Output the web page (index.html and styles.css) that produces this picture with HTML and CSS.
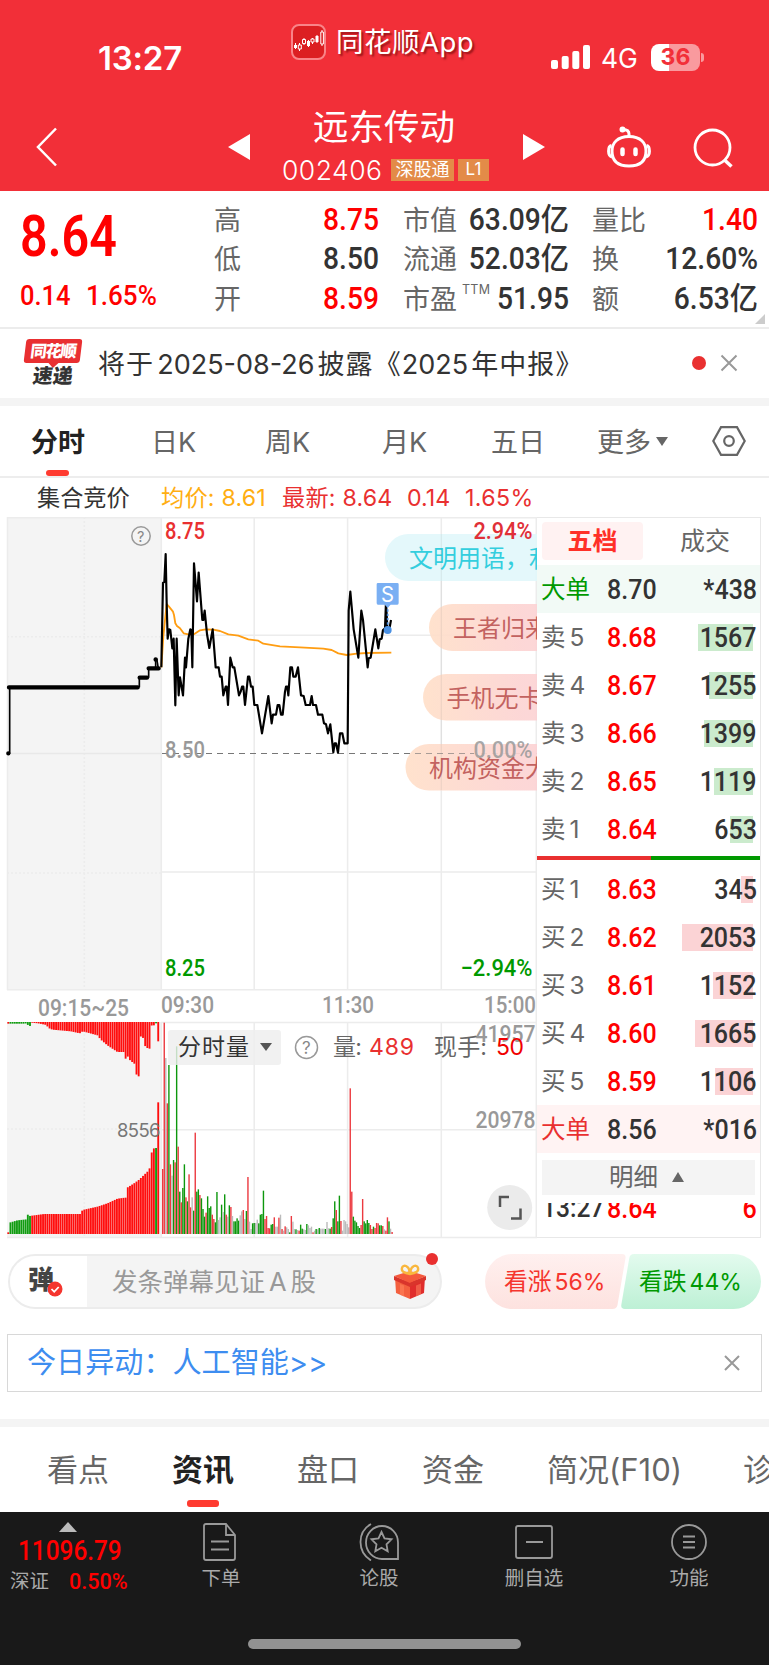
FILE: index.html
```html
<!DOCTYPE html>
<html lang="zh-CN">
<head>
    <meta charset="UTF-8">
    <meta name="viewport" content="width=device-width, initial-scale=1.0">
    <title>远东传动 002406</title>
    <link rel="stylesheet" href="styles.css">
</head>
<body>
    <header>
        <div class="status">
            <span class="clock">13:27</span>
            <div class="app">
                <svg width="36" height="36" viewBox="0 0 36 36">
                    <rect x="1" y="1" width="33" height="34" rx="7" fill="#dc1f22" stroke="#f98488" stroke-width="2"/>
                    <path d="M4.500 19v6M8.500 19v8M13 14v7M17.500 16v7M21.500 14v6M26 11v8M31 6v16" stroke="#fff" stroke-width="1"/>
                    <path d="M3 21h3v3h-3zM16 17h3v5h-3zM24.500 12h3v6h-3z" fill="#fff"/>
                    <path d="M7.300 21h3v4h-3zM11.500 15.500h3v4h-3zM20 15h3v3h-3zM29.800 8h2.600v12h-2.600z" fill="#dc1f22" stroke="#fff" stroke-width="1"/>
                </svg>
                <span>同花顺App</span>
            </div>
            <div class="signal">
                <svg width="39" height="25" viewBox="0 0 39 25" fill="#fff">
                    <rect x="0" y="15" width="7" height="9" rx="2"/>
                    <rect x="10.700" y="11" width="7" height="13" rx="2"/>
                    <rect x="21.300" y="6" width="7" height="18" rx="2"/>
                    <rect x="32" y="0" width="7" height="24" rx="2"/>
                </svg>
                <span class="net">4G</span>
                <span class="battery">36</span>
                <i class="nub"></i>
            </div>
        </div>
        <div class="nav">
            <svg class="back" width="22" height="40" viewBox="0 0 22 40"><path d="M20 1.500L2 20l18 18.500" fill="none" stroke="#fff" stroke-width="2.500"/></svg>
            <svg class="prev" width="22" height="26" viewBox="0 0 22 26"><path d="M22 0v26L0 13z" fill="#fff"/></svg>
            <div class="stock">
                <h1>远东传动</h1>
                <div class="code"><span>002406</span><b class="tag">深股通</b><b class="tag tag-l1">L1</b></div>
            </div>
            <svg class="next" width="22" height="26" viewBox="0 0 22 26"><path d="M0 0v26l22-13z" fill="#fff"/></svg>
            <svg class="robot" width="46" height="42" viewBox="0 0 46 42" fill="none" stroke="#fff" stroke-width="3">
                <path d="M23 10.500C11.500 10.500 6 17 6 25s3.500 15 17 15 17-7 17-15-5.500-14.500-17-14.500z"/>
                <path d="M5.500 19.500C1.500 20.500 1.500 30 6 31M40.500 19.500C44.500 20.500 44.500 30 40 31M23 10V8c0-3.500-2.500-4.500-6-4.500"/>
                <circle cx="16.500" cy="3.500" r="1.500" fill="#fff"/>
                <path d="M16.500 23.500v4.500M29.500 23.500v4.500" stroke-width="4.500" stroke-linecap="round"/>
            </svg>
            <svg class="search" width="42" height="42" viewBox="0 0 42 42" fill="none" stroke="#fff" stroke-width="2.800"><circle cx="19.500" cy="19.500" r="17.500"/><path d="M31.500 32l7 6.500" stroke-width="3.500"/></svg>
        </div>
    </header>

    <section class="quote">
        <div class="last">
            <span class="price num">8.64</span>
            <div class="change"><span class="num">0.14</span><span class="num">1.65%</span></div>
        </div>
        <dl class="stats s1">
            <dt>高</dt><dd class="num red">8.75</dd>
            <dt>低</dt><dd class="num">8.50</dd>
            <dt>开</dt><dd class="num red">8.59</dd>
        </dl>
        <dl class="stats s2">
            <dt>市值</dt><dd class="num">63.09亿</dd>
            <dt>流通</dt><dd class="num">52.03亿</dd>
            <dt>市盈<sup>TTM</sup></dt><dd class="num">51.95</dd>
        </dl>
        <dl class="stats s3">
            <dt>量比</dt><dd class="num red">1.40</dd>
            <dt>换</dt><dd class="num">12.60%</dd>
            <dt>额</dt><dd class="num">6.53亿</dd>
        </dl>
        <i class="corner"></i>
    </section>

    <section class="notice">
        <div class="express"><b class="bubble">同花顺</b><b class="black">速递</b></div>
        <p>将于<span>2025-08-26</span>披露《<span class="year">2025</span>年中报》</p>
        <i class="dot"></i>
        <svg class="close" width="18" height="18" viewBox="0 0 18 18"><path d="M1.500 1.500l15 15M16.500 1.500l-15 15" stroke="#999" stroke-width="2"/></svg>
    </section>

    <nav class="periods">
        <span class="active">分时</span>
        <span>日K</span>
        <span>周K</span>
        <span>月K</span>
        <span>五日</span>
        <span>更多<i class="caret"></i></span>
        <svg width="34" height="30" viewBox="0 0 34 30" fill="none" stroke="#666" stroke-width="2.200"><path d="M9 1.200h16L32.700 15 25 28.800H9L1.300 15z"/><circle cx="17" cy="15" r="4.800"/></svg>
    </nav>

    <div class="info">
        <span class="i-call">集合竞价</span>
        <span class="i-avg">均价: 8.61</span>
        <span class="i-new">最新: 8.64</span>
        <span class="i-chg">0.14</span>
        <span class="i-pct">1.65%</span>
    </div>

    <main>
        <div class="chart">
            <svg id="chart" width="537" height="723" viewBox="0 0 537 723">
                <defs>
                    <linearGradient id="warm" x1="0" x2="1"><stop offset="0" stop-color="#ffe0ca"/><stop offset="1" stop-color="#fcd3d5"/></linearGradient>
                </defs>
                <!-- 背景与网格 -->
                <rect x="7" y="0" width="154" height="473" fill="#f4f4f4"/>
                <rect x="7" y="505" width="154" height="216" fill="#f4f4f4"/>
                <g fill="none" stroke="#ececec" stroke-width="1.500">
                    <path d="M7 .700H537M7 472.800H537M161 118.300H537M161 355H537M7.500 0V473M161.300 0V473M254.200 0V473M347.600 0V473M441.300 0V473M536.300 0V721"/>
                    <path d="M161 505.500H537M161 612.700H537M7 720.500H537M161.300 505V721M254.200 505V721M347.600 505V721M441.300 505V721"/>
                    <path d="M84.300 0V473M84.300 505V721M7 119.800H161M7 356H161M7 612H161" stroke-dasharray="2 2"/>
                    <path d="M7 236.500H161" stroke="#e8e8e8"/>
                </g>
                <path d="M162 236.500H537" stroke="#777" stroke-width="1.200" stroke-dasharray="6 5"/>

                <!-- 弹幕 -->
                <g opacity=".93" font-size="24">
                    <path d="M537 17H408.500a23.500 23.500 0 0 0 0 47H537z" fill="#e2f8fb"/>
                    <text x="409" y="50" fill="#25cbdc">文明用语，利</text>
                    <path d="M537 87H452.500a23.500 23.500 0 0 0 0 47H537z" fill="url(#warm)"/>
                    <text x="453" y="120" fill="#bf5754">王者归来</text>
                    <path d="M537 157H446.300a23.250 23.250 0 0 0 0 46.500H537z" fill="url(#warm)"/>
                    <text x="446.500" y="190" fill="#bf5754">手机无卡</text>
                    <path d="M537 227H428.800a23.250 23.250 0 0 0 0 46.500H537z" fill="url(#warm)"/>
                    <text x="429" y="260" fill="#bf5754">机构资金大</text>
                </g>
                <path d="M441.300 17V273" stroke="#777" stroke-opacity=".1" stroke-width="1.200"/>
                <path d="M404 236.500H474" stroke="#777" stroke-opacity=".6" stroke-width="1.200" stroke-dasharray="6 5"/>

                <!-- 分时走势 -->
                <g transform="translate(0 -7) scale(.33333)" fill="none" stroke-linejoin="round">
                    <path stroke="#ff9d12" stroke-width="5.500" d="M484 472L490 380L500 282L507 290L519 305L522 315L526 340L531 348L540 355L551 370L565 373L583 372L600 361L617 358L640 359L660 363L685 373L715 377L745 388L775 392L790 401L840 409L900 412L970 416L995 420L1015 430L1040 435L1070 431L1100 429L1174 428"/>
                    <path stroke="#000" stroke-width="6.500" d="M484 472L489 218L493 216L497 132L500 280L503 386L507 358L511 360L517 415L521 386L526 586L530 386L536 556L540 502L549 556L555 443L558 472L565 386L571 358L574 360L577 472L582 160L591 274L596 188L607 330L610 330L614 302L621 372L628 414L638 358L647 472L656 472L660 500L665 500L670 556L677 530L680 530L684 585L691 443L698 472L703 472L717 556L722 545L726 530L730 530L735 585L744 500L748 500L753 530L758 530L763 585L772 585L786 670L805 558L815 640L819 614L828 614L833 585L838 585L843 614L848 614L855 545L858 530L862 530L865 556L871 472L876 472L880 500L887 500L894 472L903 556L911 558L917 585L930 585L935 558L939 585L948 585L954 614L967 614L972 640L978 643L984 670L991 643L1000 727L1004 700L1008 700L1014 728L1020 670L1027 670L1033 700L1043 700L1046 302L1051 245L1061 358L1075 443L1084 302L1089 330L1103 472L1106 445L1112 443L1126 358L1135 415L1139 388L1145 386L1149 360L1155 355L1158 275L1162 355L1168 358L1173 330"/>
                    <path stroke="#000" stroke-width="5" d="M22 730H29V532M418 532V503M446 503V475M467 475V446"/>
                    <path stroke="#000" stroke-width="13" stroke-linecap="round" d="M27 532H413M419 503H441M446 475H476M467 448v1M25 730v0"/>
                    <path stroke="#000" stroke-width="5" d="M470 446L475 475"/>
                    <path d="M1163 285V360" stroke="#4a8ee0" stroke-width="5" stroke-dasharray="7 6"/>
                    <circle cx="1163" cy="360" r="12" fill="#4a90e2"/>
                    <path d="M1134 219h58q4 0 4 4v56q0 5-4 5h-20l-9 9-9-9h-20q-4 0-4-5v-56q0-4 4-4z" fill="#7aaff3"/>
                </g>
                <text x="381" y="85" font-size="21" fill="#fff" textLength="13" lengthAdjust="spacingAndGlyphs">S</text>

                <!-- 成交量 -->
                <g id="volume" transform="translate(0 493) scale(.33333)" fill="none"></g>
                <rect x="168" y="513" width="113" height="35" rx="3" fill="#eeeeee" fill-opacity=".82"/>
                <path d="M260 526h12l-6 8z" fill="#555"/>

                <!-- 坐标文字 -->
                <g class="axis" font-size="23.500">
                    <text x="165" y="22" textLength="40" lengthAdjust="spacingAndGlyphs" fill="#e93030">8.75</text>
                    <text x="473.500" y="22" textLength="59" lengthAdjust="spacingAndGlyphs" fill="#e03038">2.94%</text>
                    <text x="165" y="240.500" textLength="40" lengthAdjust="spacingAndGlyphs" fill="#999">8.50</text>
                    <text x="473.500" y="240.500" textLength="59" lengthAdjust="spacingAndGlyphs" fill="#999" fill-opacity=".85">0.00%</text>
                    <text x="165" y="459" textLength="40" lengthAdjust="spacingAndGlyphs" fill="#009900">8.25</text>
                    <text x="460.500" y="459" textLength="72" lengthAdjust="spacingAndGlyphs" fill="#009900">−2.94%</text>
                </g>
                <g class="axis grey" font-size="23.500">
                    <text x="38" y="498.500" textLength="91" lengthAdjust="spacingAndGlyphs">09:15~25</text>
                    <text x="161" y="496" textLength="53" lengthAdjust="spacingAndGlyphs">09:30</text>
                    <text x="322" y="496" textLength="52" lengthAdjust="spacingAndGlyphs">11:30</text>
                    <text x="484" y="496" textLength="52" lengthAdjust="spacingAndGlyphs">15:00</text>
                    <text x="475.500" y="525" textLength="60" lengthAdjust="spacingAndGlyphs">41957</text>
                    <text x="475.500" y="611" textLength="60" lengthAdjust="spacingAndGlyphs">20978</text>
                </g>
                <text x="117" y="620" font-size="18.500" fill="#777" textLength="43.500">8556</text>
                <g font-size="23" fill="#666">
                    <text x="178" y="538" fill="#333" textLength="71">分时量</text>
                    <text x="333" y="538" textLength="29">量:</text>
                    <text x="369" y="538" fill="#e93030" textLength="45">489</text>
                    <text x="434" y="538" textLength="53">现手:</text>
                    <text x="496" y="538" fill="#f00000" textLength="28">50</text>
                </g>
                <g fill="none" stroke="#999" stroke-width="1.500"><circle cx="141" cy="19" r="9.200"/><circle cx="306.500" cy="530.500" r="11"/></g>
                <text x="137" y="24.500" font-size="14.500" fill="#888">?</text>
                <text x="302" y="537" font-size="17" fill="#888">?</text>

                <circle cx="509.700" cy="690.500" r="22.500" fill="#ebebeb"/>
                <path d="M500 690v-10h9M520.500 691.500v10h-9.500" fill="none" stroke="#555" stroke-width="2.500"/>
            </svg>
        </div>

        <aside class="book">
            <div class="book-tabs"><b>五档</b><span>成交</span></div>
            <div class="row big sell"><span>大单</span><em class="num">8.70</em><strong class="num">*438</strong></div>
            <div class="row sell"><span>卖<u>5</u></span><em class="num">8.68</em><i style="width:55px"></i><strong class="num">1567</strong></div>
            <div class="row sell"><span>卖<u>4</u></span><em class="num">8.67</em><i style="width:44px"></i><strong class="num">1255</strong></div>
            <div class="row sell"><span>卖<u>3</u></span><em class="num">8.66</em><i style="width:49px"></i><strong class="num">1399</strong></div>
            <div class="row sell"><span>卖<u>2</u></span><em class="num">8.65</em><i style="width:39px"></i><strong class="num">1119</strong></div>
            <div class="row sell"><span>卖<u>1</u></span><em class="num">8.64</em><i style="width:23px"></i><strong class="num">653</strong></div>
            <div class="ratio"></div>
            <div class="row buy"><span>买<u>1</u></span><em class="num">8.63</em><i style="width:12px"></i><strong class="num">345</strong></div>
            <div class="row buy"><span>买<u>2</u></span><em class="num">8.62</em><i style="width:71px"></i><strong class="num">2053</strong></div>
            <div class="row buy"><span>买<u>3</u></span><em class="num">8.61</em><i style="width:40px"></i><strong class="num">1152</strong></div>
            <div class="row buy"><span>买<u>4</u></span><em class="num">8.60</em><i style="width:58px"></i><strong class="num">1665</strong></div>
            <div class="row buy"><span>买<u>5</u></span><em class="num">8.59</em><i style="width:38px"></i><strong class="num">1106</strong></div>
            <div class="row big buy"><span>大单</span><em class="num">8.56</em><strong class="num">*016</strong></div>
            <div class="detail">明细<i></i></div>
            <div class="ticks">
                <div class="tick"><span class="num">13:27</span><em class="num">8.64</em><strong class="num">6</strong></div>
                <div class="tick"><span class="num"></span><em class="num">8.64</em><strong class="num">50</strong></div>
            </div>
        </aside>
    </main>

    <section class="danmu">
        <div class="input">
            <div class="switch">弹<svg width="16" height="16" viewBox="0 0 16 16"><circle cx="8" cy="8" r="7.500" fill="#f5352e"/><path d="M4.500 8l2.700 2.800 4.500-4.800" fill="none" stroke="#fff" stroke-width="1.800"/></svg></div>
            <p>发条弹幕见证<span>A</span>股</p>
            <svg class="gift" width="34" height="36" viewBox="0 0 34 36">
                <path d="M2 13l15 5v17L3 29z" fill="#f4603f"/>
                <path d="M32 13l-15 5v17l14-6z" fill="#e02d2c"/>
                <path d="M17 7l16 5-16 7L1 12z" fill="#f5593c"/>
                <path d="M1 12l16 7v4L1 16zM33 12l-16 7v4l16-7z" fill="#d9352c"/>
                <path d="M7 20l4 1.500v11l-4-1.700zM23 21.500l5-2v10.700l-5 2z" fill="#ff8a62" opacity=".5"/>
                <path d="M17 10c-5-1-9-2-8-6s7-3 8 5c1-8 7-9 8-5s-3 5-8 6z" fill="none" stroke="#f9b73d" stroke-width="2.400"/>
            </svg>
            <i class="dot"></i>
        </div>
        <div class="vote">
            <svg width="276" height="55" viewBox="0 0 276 55">
                <defs>
                    <linearGradient id="up" x1="0" x2="0" y1="0" y2="1"><stop offset="0" stop-color="#fff0ef"/><stop offset="1" stop-color="#fde2df"/></linearGradient>
                    <linearGradient id="down" x1="0" x2="0" y1="0" y2="1"><stop offset="0" stop-color="#e3fbee"/><stop offset="1" stop-color="#bdf0d5"/></linearGradient>
                </defs>
                <path d="M27.500 0H137q4 0 3.500 4l-8 47q-.800 4-5 4H27.500a27.500 27.500 0 0 1 0-55z" fill="url(#up)"/>
                <path d="M248.500 0H149q-4 0-4.700 4l-8 47q-.500 4 3.500 4H248.500a27.500 27.500 0 0 0 0-55z" fill="url(#down)"/>
            </svg>
            <span class="up">看涨<u>56%</u></span>
            <span class="down">看跌<u>44%</u></span>
        </div>
    </section>

    <section class="move">
        <span>今日异动：人工智能&gt;&gt;</span>
        <svg width="18" height="16" viewBox="0 0 18 16"><path d="M2 1l14 14M16 1L2 15" stroke="#999" stroke-width="2"/></svg>
    </section>

    <nav class="tabs">
        <span>看点</span>
        <span class="active">资讯</span>
        <span>盘口</span>
        <span>资金</span>
        <span class="wide">简况(F10)</span>
        <span class="cut">诊</span>
    </nav>

    <footer>
        <div class="bar">
            <div class="index">
                <i></i>
                <b class="num">11096.79</b>
                <div><span>深证</span><b class="num">0.50%</b></div>
            </div>
            <div class="item i1">
                <svg width="40" height="38" viewBox="0 0 40 38"><path d="M5 1h20l9 11v23q0 2-2 2H5q-2 0-2-2V3q0-2 2-2zM25 1v11h9M10 18.500h18M10 26.500h18"/></svg>
                <span>下单</span>
            </div>
            <div class="item i2">
                <svg width="40" height="38" viewBox="0 0 40 38"><path d="M39 36H23A16 16.500 0 1 1 39 19.500zM12 1C-2 9-2 29 12 37.500M22.500 9l3 6.500 7 .800-5 5 1.200 7-6.200-3.500-6.200 3.500 1.200-7-5-5 7-.800z"/></svg>
                <span>论股</span>
            </div>
            <div class="item i3">
                <svg width="40" height="38" viewBox="0 0 40 38"><path d="M4 3h32q2 0 2 2v28q0 2-2 2H4q-2 0-2-2V5q0-2 2-2zM12 19h17"/></svg>
                <span>删自选</span>
            </div>
            <div class="item i4">
                <svg width="40" height="38" viewBox="0 0 40 38"><circle cx="20" cy="19" r="17"/><path d="M14 13.500h12M14 19h12M14 24.500h12"/></svg>
                <span>功能</span>
            </div>
        </div>
        <div class="home"></div>
    </footer>

    <script src="chart.js"></script>
</body>
</html>
```
FILE: chart.js
```javascript
const COLORS = { r: '#ec3a40', g: '#0d970d', x: '#bbbbbb', R: '#ff0d0d', G: '#109c10' };
const volume = document.getElementById('volume');

function bar(x, y, height, width, color) {
    const rect = document.createElementNS('http://www.w3.org/2000/svg', 'rect');
    rect.setAttribute('x', x);
    rect.setAttribute('y', y);
    rect.setAttribute('width', width);
    rect.setAttribute('height', height);
    rect.setAttribute('fill', COLORS[color]);
    volume.appendChild(rect);
}

// 每分钟成交量
const minutes = 'r195 r634 x528 r392 g507 r209 x175 g222 r215 g563 r262 g127 r95 g138 g209 r110 g98 r179 r80 x110 g70 r304 g127 g134 r117 g107 g75 g52 r64 g113 g78 g83 r58 r45 g35 g126 x42 x50 g88 x66 g119 r58 x52 g86 r81 x54 g38 g38 g47 g40 x56 x68 r72 x45 g69 r171 x37 x15 g32 g33 x33 x43 g32 g58 g60 g130 r45 r54 r18 r17 g28 g30 r50 x22 x22 r49 x58 r15 x10 r23 x20 x15 g5 r54 x37 x15 g14 x12 r10 g28 g16 x14 x12 g30 x26 x18 x22 r5 x10 g15 x14 g18 x16 x16 x16 g15 x36 x17 g16 r21 g47 g98 r72 g38 g115 r39 x10 x42 x38 x30 x20 r437 r127 g52 g40 g35 g24 g18 r27 r105 g38 g32 g42 g33 r27 r15 g22 r18 r33 r32 g26 g26 r24 x14 r10 r50 g38 x16 r6'.split(' ');
minutes.forEach((item, i) => {
    const h = Number(item.slice(1));
    bar(486 + i * 4.65, 672 - h, h, 4.2, item[0]);
});

// 集合竞价：[x, 高度]
const matched = [[22, 5], [26, 34], [50, 41], [78, 44], [81, 58], [86, 54], [130, 60], [240, 60], [245, 72], [290, 82], [320, 92], [350, 106], [373, 109], [376, 137], [400, 152], [415, 163], [440, 187], [447, 198], [452, 243], [460, 258], [466, 297], [472, 395]];
const unmatched = [[22, 5], [70, 5], [78, 4], [82, 10], [88, 12], [93, 2], [112, 4], [137, 9], [143, 18], [155, 23], [210, 28], [237, 34], [246, 28], [290, 40], [300, 53], [320, 70], [350, 90], [372, 119], [378, 98], [386, 113], [400, 125], [404, 154], [412, 163], [418, 42], [427, 48], [433, 72], [442, 80], [447, 12], [455, 10], [460, 43], [465, 4], [472, 58]];

function heightAt(points, x) {
    let last = points[0];
    for (const p of points) {
        if (p[0] > x) {
            if (Math.abs(p[1] - last[1]) > 26) return last[1];
            return last[1] + (p[1] - last[1]) * (x - last[0]) / (p[0] - last[0]);
        }
        last = p;
    }
    return last[1];
}

for (let i = 0; i < 70; i++) {
    const x = 22 + i * 6.52;
    const green = (x > 24 && x < 92) || (x > 463 && x < 470);
    const h = heightAt(matched, x + 0.5);
    bar(x, 672 - h, h, 5.6, green ? 'G' : 'R');
    bar(x, 36, heightAt(unmatched, x + 0.5), 5.6, green ? 'G' : 'R');
}
```
FILE: styles.css
```css
* {
    box-sizing: border-box;
}

body {
    width: 769px;
    height: 1665px;
    margin: 0;
    overflow: hidden;
    background: #fff;
    color: #333;
    font-family: Inter, "Noto Sans CJK SC", sans-serif;
}

h1, p, dl, dd {
    margin: 0;
}

i, em {
    font-style: normal;
}

u {
    text-decoration: none;
}

svg {
    display: block;
    flex: none;
}

/* DIN 风格数字 */
.num {
    display: inline-block;
    font-family: Roboto, "Noto Sans CJK SC", sans-serif;
    font-weight: 500;
    transform: scaleX(.91);
    transform-origin: left;
    white-space: nowrap;
}

.red {
    color: #ff0000;
}

.dot {
    display: block;
    border-radius: 50%;
    background: #e93030;
}

/* 顶部 */
header {
    height: 191px;
    background: #f22f38;
    color: #fff;
}

.status {
    display: flex;
    align-items: center;
    height: 96px;
    padding: 19px 0 0 98px;
}

.clock {
    width: 193px;
    font-size: 33px;
    font-weight: 600;
    letter-spacing: -.2px;
}

.app {
    display: flex;
    align-items: center;
    width: 260px;
    margin-top: -32px;
    font-size: 27.500px;
    line-height: 36px;
    text-shadow: 2px 2px 2px rgba(90, 0, 0, .6);
}

.app span {
    margin-left: 9px;
    letter-spacing: .5px;
}

.signal {
    display: flex;
    align-items: center;
}

.net {
    width: 49px;
    padding-left: 11px;
    font-size: 26.500px;
}

.battery {
    width: 49px;
    height: 27px;
    margin-left: 12px;
    border-radius: 8px;
    background: linear-gradient(90deg, #fff 36%, #f99a9e 36%);
    color: #f22f38;
    font-size: 23px;
    font-weight: 700;
    line-height: 27px;
    text-align: center;
}

.nub {
    width: 3px;
    height: 9px;
    margin-left: 1px;
    border-radius: 0 3px 3px 0;
    background: #f99a9e;
}

.nav {
    display: flex;
    height: 95px;
}

.back {
    margin: 31px 171px 0 36px;
}

.prev {
    margin: 38px 32px 0 -1px;
}

.stock {
    width: 240px;
}

.stock h1 {
    margin: 6px 0 0 31px;
    font-size: 35.500px;
    font-weight: 400;
    line-height: 52px;
    white-space: nowrap;
}

.code {
    display: flex;
    align-items: center;
    height: 40px;
    margin-top: -4px;
    font-size: 26.500px;
    font-weight: 300;
}

.code span {
    width: 109px;
    letter-spacing: .5px;
}

.tag {
    width: 63px;
    height: 22px;
    margin-right: 4px;
    background: #e38b48;
    font-size: 18px;
    font-weight: 400;
    line-height: 21px;
    text-align: center;
}

.tag-l1 {
    width: 31px;
    font-size: 17px;
}

.next {
    margin: 38px 0 0 1px;
}

.robot {
    margin: 30px 0 0 61px;
}

.search {
    margin: 32px 0 0 41px;
}

/* 行情 */
.quote {
    display: flex;
    position: relative;
    height: 138px;
    border-bottom: 2px solid #ececec;
}

.last {
    width: 214px;
    padding: 14px 0 0 20px;
    color: #ff0000;
}

.price {
    display: block;
    font-size: 57px;
    font-weight: 600;
    line-height: 63px;
    transform: scaleX(.85);
}

.change {
    display: flex;
    margin-top: 10px;
    font-size: 28px;
    line-height: 36px;
}

.change .num:first-child {
    width: 66px;
}

.change .num:last-child {
    transform: scaleX(.93);
}

.stats {
    display: grid;
    grid-template-columns: auto 1fr;
    grid-auto-rows: 39.300px;
    height: 120px;
    margin-top: 9px;
    font-size: 27px;
    line-height: 41px;
}

.stats dt {
    position: relative;
    color: #666;
    white-space: nowrap;
}

.stats dd {
    font-size: 31px;
    line-height: 40px;
    text-align: right;
    transform-origin: right;
}

.s1 {
    width: 165px;
}

.s2 {
    width: 166px;
    margin-left: 24px;
}

.s3 {
    width: 166px;
    margin-left: 23px;
}

.stats sup {
    position: absolute;
    top: -10px;
    left: 59px;
    font-size: 12.500px;
    letter-spacing: .3px;
}

.corner {
    position: absolute;
    right: 4px;
    bottom: 3px;
    border-left: 10px solid transparent;
    border-bottom: 10px solid #ccc;
}

/* 公告 */
.notice {
    display: flex;
    align-items: center;
    height: 77px;
    border-bottom: 8px solid #f4f4f4;
}

.express {
    position: relative;
    width: 98px;
    padding-left: 25px;
    text-align: center;
}

.express b {
    display: block;
    width: 56px;
    font-size: 18px;
    font-weight: 900;
    line-height: 24px;
    white-space: nowrap;
    transform: skewX(-7deg);
}

.express .bubble {
    border-radius: 3px;
    background: #e92f31;
    color: #fff;
    font-size: 16.500px;
    letter-spacing: -1.500px;
}

.bubble::after {
    content: "";
    position: absolute;
    top: 23px;
    left: 24px;
    border: 6px solid transparent;
    border-top-color: #e92f31;
    border-bottom: 0;
}

.express .black {
    padding-top: 1px;
    font-size: 20px;
}

.notice p {
    width: 594px;
    margin-top: -3px;
    font-size: 27px;
    white-space: nowrap;
    letter-spacing: 1.100px;
}

.notice p span {
    margin: 0 3px 0 3px;
    letter-spacing: 0;
}

.notice p .year {
    margin-left: 0;
}

.notice .dot {
    width: 14px;
    height: 14px;
    margin-top: -1px;
}

.notice .close {
    margin: -2px 0 0 14px;
}

/* 周期切换 */
.periods {
    display: flex;
    height: 72px;
    padding-left: 31px;
    border-bottom: 2px solid #ededed;
    color: #666;
    font-size: 27px;
    line-height: 73px;
}

.periods span {
    position: relative;
    flex: none;
    width: 114px;
}

.periods span:nth-child(1) {
    width: 120px;
}

.periods span:nth-child(3) {
    width: 117px;
}

.periods span:nth-child(4) {
    width: 109px;
}

.periods span:nth-child(5) {
    width: 106px;
}

.periods span:nth-child(6) {
    width: 115px;
}

.periods svg {
    margin-top: 20px;
}

.periods .active,
.tabs .active {
    color: #222;
    font-weight: 700;
}

.active::after {
    content: "";
    position: absolute;
    left: 15px;
    bottom: 0;
    width: 23px;
    height: 6px;
    border-radius: 3px;
    background: #ff3b30;
}

.caret {
    display: inline-block;
    margin: 0 0 6px 5px;
    border: 6px solid transparent;
    border-top: 9px solid #666;
    border-bottom: 0;
}

.info {
    display: flex;
    height: 39px;
    padding-left: 37px;
    font-size: 23.200px;
    line-height: 40px;
    white-space: nowrap;
    color: #e93030;
}

.info span {
    flex: none;
}

.info .i-call {
    width: 124px;
    color: #333;
}

.info .i-avg {
    width: 121px;
    color: #ffae12;
    letter-spacing: .2px;
}

.info .i-new {
    width: 125px;
    letter-spacing: .2px;
}

.info .i-chg {
    width: 58px;
}

.info .i-pct {
    letter-spacing: .4px;
}

/* 分时图与五档 */
main {
    display: flex;
    height: 723px;
}

.chart {
    width: 537px;
}

.chart .axis {
    font-family: Roboto, sans-serif;
    font-weight: 500;
}

.chart .grey {
    fill: #999;
}

.book {
    width: 224px;
    height: 721px;
    border: 1px solid #e8e8e8;
    border-left: 0;
    overflow: hidden;
}

.book-tabs {
    display: flex;
    height: 47px;
    padding: 4px 0 0 5px;
    font-size: 25px;
    line-height: 38px;
    text-align: center;
}

.book-tabs b {
    flex: none;
    width: 101px;
    height: 38px;
    border-radius: 4px;
    background: #fff2f2;
    color: #ff3028;
}

.book-tabs span {
    flex: none;
    width: 117px;
    padding-left: 7px;
    color: #666;
}

.row {
    display: flex;
    position: relative;
    height: 48px;
    padding: 0 3px 0 4px;
    font-size: 24.500px;
    line-height: 49px;
}

.row span {
    width: 66px;
    color: #666;
    white-space: nowrap;
}

.row u {
    margin-left: 4px;
}

.row em, .tick em {
    color: #ff0000;
    font-size: 27.500px;
}

.row strong, .tick strong {
    position: relative;
    margin-left: auto;
    font-size: 27.500px;
    transform-origin: right;
}

.row i {
    position: absolute;
    right: 7px;
    top: 11px;
    height: 27px;
    background: #cbebcd;
}

.buy i {
    background: #fbd3d5;
}

.row.big em {
    color: #333;
}

.big.sell {
    background: #f2faf6;
}

.big.buy {
    background: #fff3f3;
}

.big.sell span {
    color: #009900;
}

.big.buy span {
    color: #e93030;
}

.ratio {
    height: 4px;
    margin: 3px 0 5px;
    background: linear-gradient(90deg, #e93030 51%, #009900 51%);
}

.detail {
    height: 35px;
    margin: 7px 5px 8px;
    padding-right: 4px;
    background: #f4f4f4;
    color: #666;
    font-size: 24.500px;
    line-height: 35px;
    text-align: center;
}

.detail i {
    display: inline-block;
    margin: 0 0 4px 14px;
    border: 6.500px solid transparent;
    border-top: 0;
    border-bottom: 10px solid #666;
}

.ticks {
    display: flex;
    flex-direction: column;
    height: 35px;
    padding: 0 3px 0 5px;
    overflow: hidden;
}

.tick {
    display: flex;
    flex: none;
    height: 48px;
    margin-top: -19px;
    line-height: 49px;
}

.tick + .tick {
    margin-top: -9px;
}

.tick span {
    width: 65px;
    font-size: 27px;
}

.tick strong {
    color: #ff0000;
}

/* 弹幕与投票 */
.danmu {
    display: flex;
    height: 94px;
    padding: 14px 0 0 8px;
}

.input {
    display: flex;
    position: relative;
    width: 434px;
    height: 55px;
    border: 2px solid #ececec;
    border-radius: 28px;
    background: #f4f4f4;
}

.switch {
    display: flex;
    width: 77px;
    padding-left: 18px;
    border-radius: 26px 0 0 26px;
    background: #fff;
    color: #444;
    font-size: 26px;
    font-weight: 900;
    line-height: 48px;
}

.switch svg {
    margin: 25px 0 0 -7px;
}

.input p {
    width: 306px;
    padding-left: 25px;
    color: #999;
    font-size: 25.500px;
    line-height: 51px;
    white-space: nowrap;
}

.input p span {
    margin: 0 4px;
}

.gift {
    margin-top: 8px;
}

.input .dot {
    position: absolute;
    top: -3px;
    right: 2px;
    width: 12px;
    height: 12px;
}

.vote {
    display: flex;
    position: relative;
    margin-left: 43px;
    font-size: 23.800px;
    line-height: 55px;
}

.vote span {
    position: absolute;
    left: 19px;
    color: #f5352e;
    white-space: nowrap;
}

.vote u {
    margin-left: 3px;
    font-size: 23px;
}

.vote .down {
    left: 154px;
    color: #009900;
}

/* 今日异动 */
.move {
    display: flex;
    align-items: center;
    justify-content: space-between;
    width: 755px;
    height: 58px;
    margin: 0 0 27px 7px;
    padding: 0 20px 0 19px;
    border: 1px solid #d8d8d8;
    color: #3d8df0;
    font-size: 29.100px;
    line-height: 54px;
    white-space: nowrap;
}

.tabs {
    display: flex;
    height: 93px;
    padding-left: 47px;
    border-top: 8px solid #f4f4f4;
    color: #666;
    font-size: 31px;
    line-height: 86px;
    white-space: nowrap;
    overflow: hidden;
}

.tabs span {
    position: relative;
    flex: none;
    width: 125px;
}

.tabs .wide {
    width: 196px;
}

.tabs .cut {
    width: 26px;
    overflow: hidden;
}

.tabs .active::after {
    bottom: 5px;
    width: 32px;
    height: 7px;
}

/* 底部导航 */
footer {
    height: 153px;
    background: #191919;
    color: #aaa;
    font-size: 19.500px;
}

.bar {
    display: flex;
    height: 127px;
}

.index {
    width: 181px;
    padding: 10px 0 0 10px;
}

.index i {
    display: block;
    width: 0;
    margin-left: 49px;
    border: 9px solid transparent;
    border-top: 0;
    border-bottom: 10px solid #bbb;
}

.index b {
    color: #ff0000;
    font-size: 22.500px;
}

.index div .num {
    transform: scaleX(.96);
}

.index > b {
    margin: 2px 0 0 8px;
    font-size: 28px;
    line-height: 34px;
    transform: scaleX(.87);
}

.index div {
    display: flex;
    line-height: 27px;
}

.index span {
    width: 59px;
}

.item {
    display: flex;
    flex-direction: column;
    align-items: center;
    width: 80px;
    padding-top: 11px;
}

.item svg {
    fill: none;
    stroke: #999;
    stroke-width: 1.800;
}

.item span {
    margin-top: 3px;
    line-height: 28px;
}

.i2 {
    margin-left: 78px;
}

.i3 {
    margin-left: 75px;
}

.i4 {
    margin-left: 75px;
}

.home {
    width: 273px;
    height: 10px;
    margin-left: 248px;
    border-radius: 5px;
    background: #929292;
}
```
